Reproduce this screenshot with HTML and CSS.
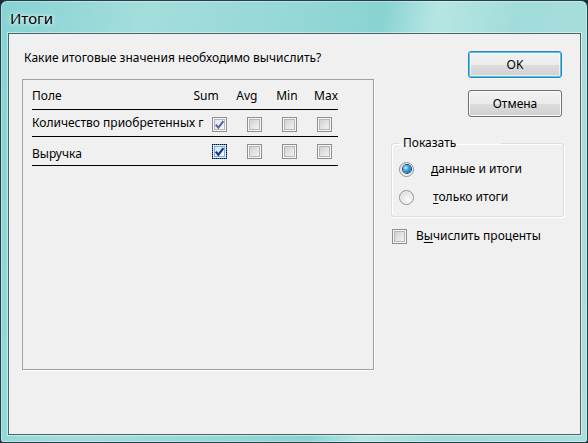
FILE: index.html
```html
<!DOCTYPE html>
<html lang="ru">
<head>
<meta charset="utf-8">
<title>Итоги</title>
<link rel="stylesheet" href="styles.css">
</head>
<body>
<div class="window">
  <div class="titlebar"><span class="title">Итоги</span></div>
  <div class="client">
    <div class="left">
      <div class="prompt">Какие итоговые значения необходимо вычислить?</div>
      <div class="panel">
        <div class="hdr">
          <span class="h-field">Поле</span><span class="h-sum">Sum</span><span class="h-avg">Avg</span><span class="h-min">Min</span><span class="h-max">Max</span>
        </div>
        <div class="row r1">
          <span class="name">Количество приобретенных г</span>
          <span class="cb checked"><svg viewBox="0 0 15 15" width="15" height="15"><path d="M3.8 7.6 L6.4 10.7 L11.4 4.2" fill="none" stroke="#5066a0" stroke-width="2"/></svg></span>
          <span class="cb"></span><span class="cb"></span><span class="cb"></span>
        </div>
        <div class="row r2">
          <span class="name">Выручка</span>
          <span class="cb checked focus"><svg viewBox="0 0 15 15" width="15" height="15"><path d="M3.8 7.6 L6.4 10.7 L11.4 4.2" fill="none" stroke="#12328c" stroke-width="2.1"/></svg></span>
          <span class="cb"></span><span class="cb"></span><span class="cb"></span>
        </div>
      </div>
    </div>
    <div class="right">
      <button class="btn default">OK</button>
      <button class="btn cancel">Отмена</button>
      <fieldset class="group">
        <legend>Показать</legend>
        <div class="opt"><span class="radio on"></span><span class="opt-label"><u>д</u>анные и итоги</span></div>
        <div class="opt opt2"><span class="radio"></span><span class="opt-label"><u>т</u>олько итоги</span></div>
      </fieldset>
      <div class="pct"><span class="cb"></span><span class="pct-label">В<u>ы</u>числить проценты</span></div>
    </div>
  </div>
</div>
</body>
</html>
```
FILE: styles.css
```css
html, body {
  margin: 0;
  padding: 0;
  background: #1c2c38;
}
body {
  font-family: "Noto Sans", "Open Sans", sans-serif;
  font-size: 12px;
  color: #000;
}
.window {
  width: 588px;
  height: 443px;
  box-sizing: border-box;
  border: 1px solid #263d4a;
  border-radius: 7px 7px 3px 3px;
  background: linear-gradient(100deg, #86d3d3 0%, #a4dddc 22%, #97d8d8 42%, #8ad3d3 58%, #b6e6e3 66%, #a2dcda 78%, #a9dfdd 100%);
  box-shadow: inset 0 0 0 1px rgba(255,255,255,0.35);
  display: flex;
  flex-direction: column;
  overflow: hidden;
}
.titlebar {
  height: 32px;
  flex: none;
  display: flex;
  align-items: center;
  padding-left: 9px;
  padding-top: 1px;
  box-sizing: border-box;
}
.title {
  font-size: 15px;
  color: #000;
  text-shadow: 0 0 6px rgba(255,255,255,0.9), 0 0 3px rgba(255,255,255,0.8);
}
.client {
  flex: 1;
  margin: 0 6px 7px 7px;
  border: 1px solid #4a6466;
  box-shadow: 0 0 0 1px rgba(255,255,255,0.45);
  background: #f0f0f0;
  display: flex;
  padding: 16px 0 0 13px;
}
.left {
  width: 352px;
  flex: none;
}
.prompt {
  margin-left: 2px;
  height: 16px;
  line-height: 16px;
  margin-bottom: 13px;
  white-space: nowrap;
}
.panel {
  height: 291px;
  box-sizing: border-box;
  border: 1px solid #a0a0a0;
  box-shadow: 1px 1px 0 #ffffff;
  padding: 0 9px;
}
.hdr {
  width: 306px;
  height: 30px;
  box-sizing: border-box;
  border-bottom: 1px solid #000;
  display: flex;
  align-items: flex-end;
  padding-bottom: 5px;
  line-height: 16px;
}
.h-field { width: 162px; }
.h-sum { width: 43px; }
.h-avg { width: 40px; }
.h-min { width: 38px; }
.row {
  width: 306px;
  box-sizing: border-box;
  border-bottom: 1px solid #000;
  display: flex;
  align-items: center;
  gap: 20px;
  line-height: 16px;
}
.r1 { height: 27px; }
.r1 .cb { margin-top: 2px; }
.r2 { height: 29px; }
.name {
  width: 170px;
  flex: none;
  white-space: nowrap;
  margin-right: -10px;
}
.r2 .name { padding-top: 5px; }
.cb {
  width: 15px;
  height: 15px;
  flex: none;
  box-sizing: border-box;
  border: 1px solid #8e8f8f;
  background: linear-gradient(135deg, #c9c9c9 0%, #e2e2e2 50%, #f8f8f8 100%);
  box-shadow: inset 0 0 0 1px #f6f6f6, inset 0 0 0 2px #b4b7ba;
  position: relative;
}
.cb svg {
  position: absolute;
  left: -1px;
  top: -1px;
}
.cb.checked {
  background: linear-gradient(135deg, #d9dde4 0%, #eef0f3 55%, #f8f9fa 100%);
}
.cb.focus {
  border-color: #3c7fb1;
  outline: 1px dotted #000;
  outline-offset: -1px;
  background: linear-gradient(135deg, #c6e1f6 0%, #e6f2fb 55%, #f6fafd 100%);
  box-shadow: inset 0 0 0 1px #deeefa, inset 0 0 0 2px #79b1dc;
}
.right {
  width: 173px;
  flex: none;
  margin-left: 17px;
  padding-top: 1px;
}
.btn {
  display: block;
  width: 94px;
  height: 27px;
  margin: 0 0 0 77px;
  padding: 0;
  font-family: inherit;
  font-size: 12px;
  color: #000;
  border: 1px solid #707070;
  border-radius: 3px;
  background: linear-gradient(#f2f2f2 0%, #ebebeb 50%, #dddddd 51%, #cfcfcf 100%);
  box-shadow: inset 0 0 0 1px #fbfbfb;
}
.btn.default {
  border-color: #3c7fb1;
  box-shadow: inset 0 0 0 1px #48c7f4, inset 0 0 0 2px rgba(255,255,255,0.6);
}
.btn.cancel {
  margin-top: 12px;
}
.group {
  margin: 18px 0 0 0;
  padding: 8px 0 9px 7px;
  border: 1px solid #d5dfe5;
  border-radius: 3px;
  box-shadow: 1px 1px 0 #fff, inset 1px 1px 0 #fff;
  min-width: 0;
  box-sizing: border-box;
  width: 173px;
}
.group legend {
  padding: 0 45px 0 4px;
  line-height: 16px;
  margin-left: 0;
}
.opt {
  height: 20px;
  display: flex;
  align-items: center;
  line-height: 16px;
}
.opt2 { margin-top: 8px; }
.opt-label { margin-left: 17px; }
.opt2 .opt-label { margin-left: 19px; }
.radio {
  width: 15px;
  height: 15px;
  box-sizing: border-box;
  border-radius: 50%;
  border: 1px solid #8f9294;
  background: radial-gradient(circle at 60% 65%, #fbfbfb 0%, #e6e6e6 50%, #cbcbcb 100%);
  box-shadow: inset 0 0 0 1px rgba(255,255,255,0.7);
  display: flex;
  align-items: center;
  justify-content: center;
  flex: none;
}
.radio.on::after {
  content: "";
  width: 8px;
  height: 8px;
  border-radius: 50%;
  background: radial-gradient(circle at 35% 35%, #c2f0ff 0%, #3f9ce0 40%, #124b8a 100%);
  box-shadow: 0 0 0 1px #1a4c7c;
}
.pct {
  margin-top: 11px;
  height: 16px;
  display: flex;
  align-items: center;
  line-height: 16px;
}
.pct .cb { margin-left: 1px; }
.pct-label { margin-left: 9px; }
u { text-decoration-thickness: 1px; text-underline-offset: 2px; }
```
